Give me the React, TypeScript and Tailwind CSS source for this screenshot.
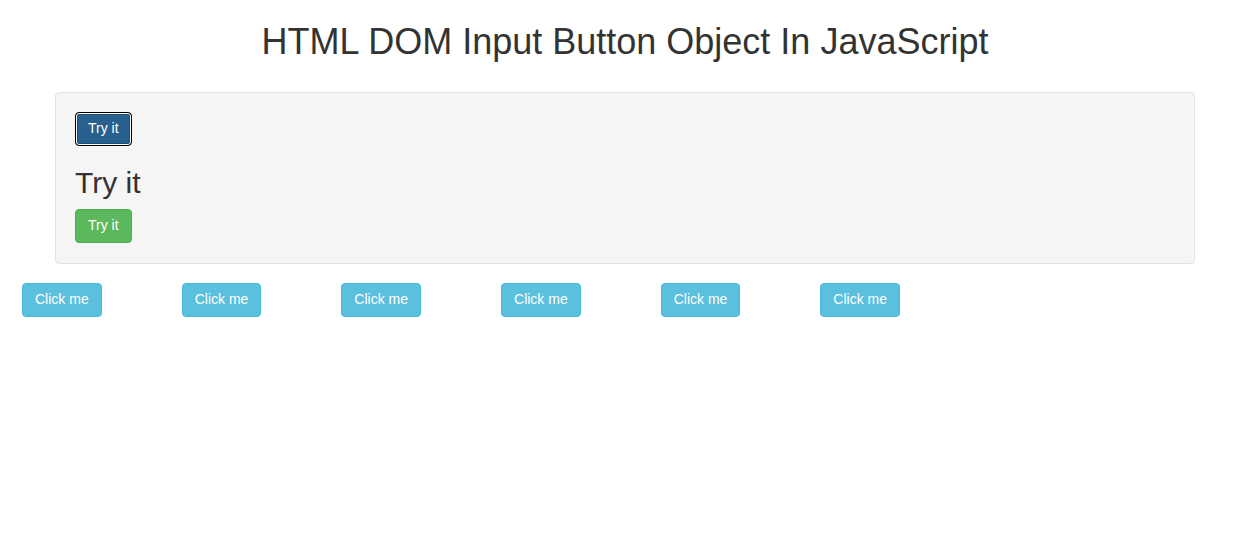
const CLICK_BUTTONS = [1, 2, 3, 4, 5, 6];

export default function App() {
  return (
    <div className="min-h-[540px] bg-white font-['Liberation_Sans',Arial,sans-serif] text-[14px] leading-[1.42857] text-[#333]">
      <div className="ml-[55px] w-[1140px]">
        <h1 className="mb-[30px] pt-[22px] text-center text-[36px] leading-[1.1] font-normal">
          HTML DOM Input Button Object In JavaScript
        </h1>
        <div className="rounded-[4px] border border-[#e3e3e3] bg-[#f5f5f5] px-[19px] pt-[19px] pb-[20px]">
          <button className="block rounded-[4px] border border-black bg-[#286090] px-[12px] py-[6px] leading-[1.42857] text-white shadow-[inset_0_0_0_1px_#fff,inset_0_0_0_2px_#204d74]">
            Try it
          </button>
          <h2 className="mt-[20px] mb-[10px] text-[30px] leading-[1.1] font-normal">Try it</h2>
          <button className="block rounded-[4px] border border-[#4cae4c] bg-[#5cb85c] px-[12px] py-[6px] leading-[1.42857] text-white">
            Try it
          </button>
        </div>
      </div>
      <div className="mt-[19px] ml-[22px] flex gap-[80px]">
        {CLICK_BUTTONS.map((n) => (
          <button
            key={n}
            className="rounded-[4px] border border-[#46b8da] bg-[#5bc0de] px-[12px] py-[6px] leading-[1.42857] text-white"
          >
            Click me
          </button>
        ))}
      </div>
    </div>
  );
}
